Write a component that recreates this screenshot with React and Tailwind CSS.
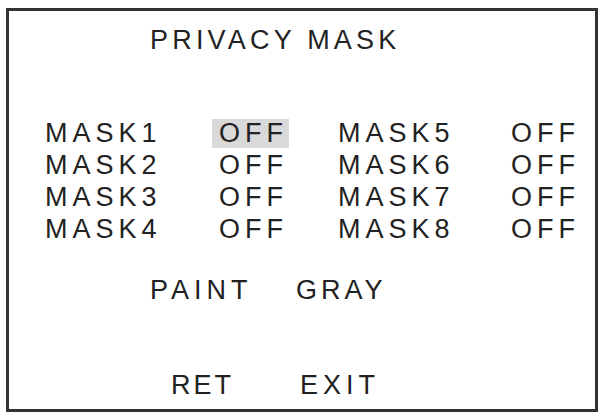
import React from "react";

const rows = [
  ["MASK1", "OFF", "MASK5", "OFF"],
  ["MASK2", "OFF", "MASK6", "OFF"],
  ["MASK3", "OFF", "MASK7", "OFF"],
  ["MASK4", "OFF", "MASK8", "OFF"],
];

export default function App() {
  return (
    <div className="w-[598px] h-[412px] bg-white overflow-hidden" style={{ fontFamily: '"Liberation Sans", Arial, sans-serif' }}>
      <div className="ml-[6px] mt-[8px] w-[592px] h-[404px] border-[3px] border-[#333] text-[#222] text-[27px] leading-[32px] tracking-[5px]">
        <div className="pt-[13px] pl-[141px] tracking-[4.2px]">PRIVACY MASK</div>
        <div className="mt-[61px] grid grid-cols-[167px_126px_173px_auto] pl-[36px]">
          {rows.map((r, i) => (
            <React.Fragment key={i}>
              <div>{r[0]}</div>
              <div>
                <span className={i === 0 ? "inline-block bg-[#d9d9d9] pl-[7px] pr-[1px] h-[29px] leading-[28px] mt-[2px]" : "inline-block pl-[7px]"}>{r[1]}</span>
              </div>
              <div>{r[2]}</div>
              <div>{r[3]}</div>
            </React.Fragment>
          ))}
        </div>
        <div className="mt-[29px] flex pl-[141px]">
          <div className="w-[146px]">PAINT</div>
          <div className="tracking-[4px]">GRAY</div>
        </div>
        <div className="mt-[63px] flex pl-[162px]">
          <div className="w-[129px] tracking-[3px]">RET</div>
          <div>EXIT</div>
        </div>
      </div>
    </div>
  );
}
